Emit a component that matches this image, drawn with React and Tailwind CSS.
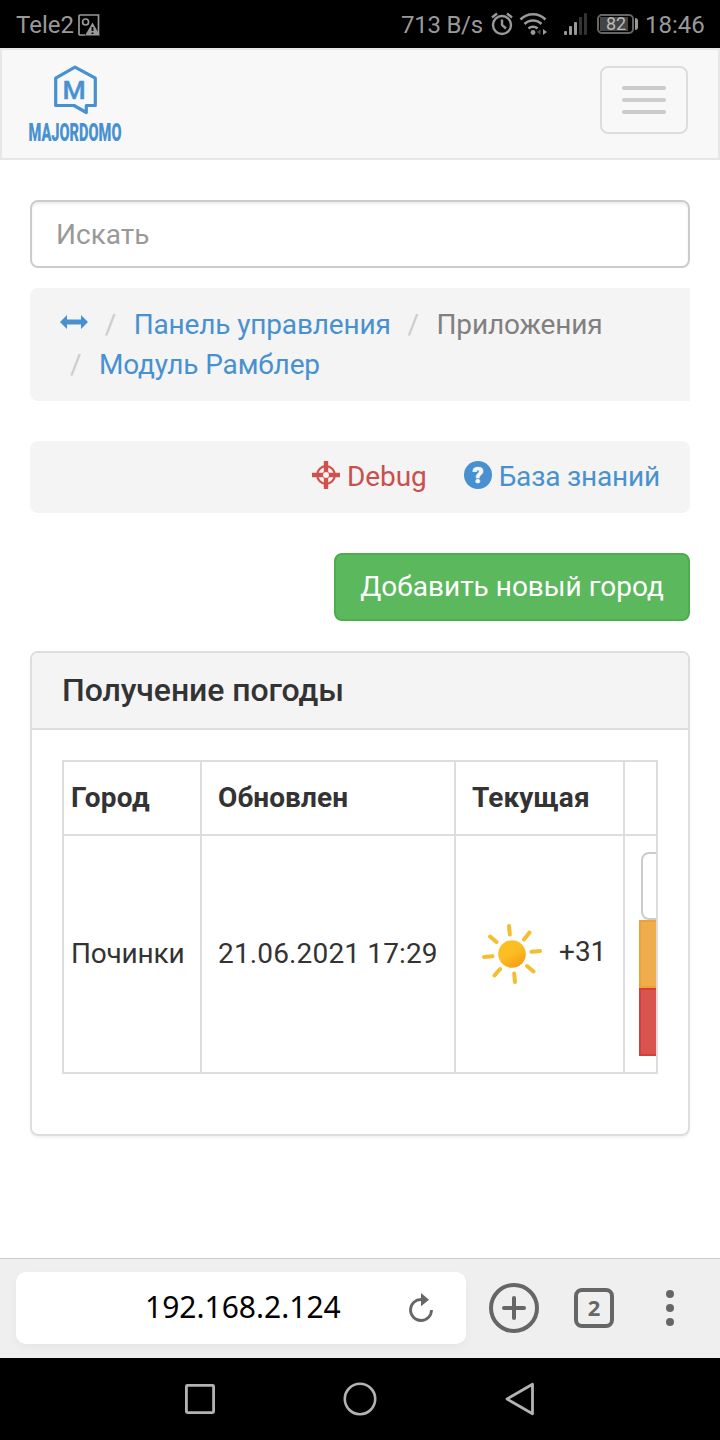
import React from 'react';

const breadcrumbs = [
  { label: 'Панель управления', active: false },
  { label: 'Приложения', active: true },
  { label: 'Модуль Рамблер', active: false },
];

const cities = [{ name: 'Починки', updated: '21.06.2021 17:29', temp: '+31' }];

const StatusBar = () => (
  <div className="flex h-12 items-center bg-black text-2xl leading-[48px] text-[#999]">
    <span className="ml-4 w-[61px] pt-[2px]">Tele2</span>
    <svg className="h-6 w-6" viewBox="0 0 24 24" fill="none">
      <path d="M8 23H3a1 1 0 0 1-1-1V4a1 1 0 0 1 1-1h18.500v19" stroke="#999" strokeWidth="1.7" />
      <circle cx="8.600" cy="10" r="3" stroke="#999" strokeWidth="1.7" />
      <path d="M15.500 10.500L23 23.500H8Z" fill="#999" />
      <path d="M15.500 15v4M15.500 20.500v1.500" stroke="#000" strokeWidth="1.8" />
    </svg>
    <span className="ml-auto w-[90px] pt-[2px] tracking-[-0.25px]">713 B/s</span>
    {/* alarm */}
    <svg className="h-6 w-6" viewBox="0 0 24 24" fill="none" stroke="#999" strokeWidth="2.400">
      <circle cx="11" cy="13" r="9" />
      <path d="M11 7.500V13l4 3.500M1 5.500L6 1.500M21 5.500L16 1.500" />
    </svg>
    {/* wifi */}
    <svg className="ml-[4px] h-6 w-7" viewBox="0 0 28 24" fill="none" stroke="#999" strokeWidth="2.600">
      <path d="M1.500 7.500a17.500 17.500 0 0 1 25 0M5.500 12a12 12 0 0 1 17 0M9.500 16.500a6.500 6.500 0 0 1 9 0" />
      <circle cx="14" cy="20.500" r="2.400" fill="#999" stroke="none" />
      <path d="M18 20l3.500-3v6Z" fill="#444" stroke="none" />
      <path d="M24 17v6l4-3Z" fill="#999" stroke="none" />
    </svg>
    <svg className="ml-[17px] h-6 w-6" viewBox="0 0 24 24">
      <rect x="0" y="19" width="3" height="4" rx="1" fill="#999" />
      <rect x="5" y="14" width="3" height="9" rx="1" fill="#999" />
      <rect x="10" y="10" width="3" height="13" rx="1" fill="#999" />
      <rect x="15" y="5" width="3" height="18" rx="1" fill="#333" />
      <rect x="20" y="1" width="3" height="22" rx="1" fill="#333" />
    </svg>
    <div className="ml-[9px] flex items-center">
      <div className="h-5 w-[37px] rounded-[5px] border-2 border-[#666] p-px">
        <div className="flex h-full w-[28px] items-center justify-center bg-[#444] pl-1 text-lg leading-none text-[#bbb]">
          82
        </div>
      </div>
      <div className="ml-px h-3 w-[3px] rounded-r-sm bg-[#999]" />
    </div>
    <span className="ml-[7px] w-[75px] pt-[2px]">18:46</span>
  </div>
);

const Logo = () => (
  <svg className="h-[88px] w-[100px]" viewBox="0 0 100 88" fill="none">
    <path
      d="M47 3.200L27.700 14.200v27.300h18.300l12.300 7v-7h9V14.200Z"
      stroke="#4891d0"
      strokeWidth="3.200"
      strokeLinejoin="round"
    />
    <text x="34.500" y="35.300" fontSize="26.500" fontWeight="500" stroke="#4891d0" strokeWidth="0.400" fill="#4891d0">
      M
    </text>
    <text
      transform="translate(0.500 77) scale(0.550 1)"
      textLength="169"
      lengthAdjust="spacingAndGlyphs"
      x="0"
      y="0"
      fontSize="25.500"
      fontWeight="900"
      fill="#4891d0"
    >
      MAJORDOMO
    </text>
  </svg>
);

const Navbar = () => (
  <nav className="flex h-28 items-start justify-between border-2 border-[#e7e7e7] bg-[#f8f8f8] pr-[30px] pl-[26px]">
    <a href="#" className="mt-[14px]">
      <Logo />
    </a>
    <button className="mt-4 flex h-[68px] w-[88px] flex-col items-center justify-center gap-2 rounded-lg border-2 border-[#ddd]">
      <span className="h-1 w-11 rounded-sm bg-[#ccc]" />
      <span className="h-1 w-11 rounded-sm bg-[#ccc]" />
      <span className="h-1 w-11 rounded-sm bg-[#ccc]" />
    </button>
  </nav>
);

const Breadcrumbs = () => (
  <ol className="mt-5 h-[113px] rounded-l-lg bg-[#f4f4f4] px-[30px] pt-[17px] leading-10 tracking-[-0.15px]">
    <li className="inline-block">
      <a href="#">
        <svg className="mb-[9px] inline-block h-[14px] w-7" viewBox="0 0 28 14" fill="#4891d0">
          <path d="M0 7L7 0v4.500h14V0l7 7l-7 7V9.500H7V14Z" />
        </svg>
      </a>
    </li>{' '}
    {breadcrumbs.map((item) => (
      <React.Fragment key={item.label}>
        <li className="inline-block">
          <span className="inline-block pr-[17.5px] pl-[10px] text-[#ccc]">/</span>
          {item.active ? (
            <span className="text-[#808080]">{item.label}</span>
          ) : (
            <a href="#" className="text-[#4891d0]">{item.label}</a>
          )}
        </li>{' '}
      </React.Fragment>
    ))}
  </ol>
);

const HelpBar = () => (
  <div className="mt-10 flex h-[72px] items-center justify-end rounded-lg bg-[#f4f4f4] px-[30px]">
    <a href="#" className="flex items-center text-[#d9534f]">
      <svg className="mr-[7px] mb-[4px] h-7 w-7" viewBox="0 0 28 28" fill="none" stroke="#d2504c">
        <circle cx="14" cy="14" r="8.800" strokeWidth="2.200" />
        <path d="M14 0v11M14 17v11M0 14h11M17 14h11" strokeWidth="4.400" />
        <circle cx="14" cy="14" r="3.500" strokeWidth="0.800" />
      </svg>
      <span className="tracking-[-0.1px] text-[#c9504d]">Debug</span>
    </a>
    <a href="#" className="ml-[37px] flex items-center tracking-[-0.18px] text-[#4891d0]">
      <svg className="mr-[7px] mb-[4px] h-7 w-7" viewBox="0 0 28 28">
        <circle cx="14" cy="14" r="14" fill="#4891d0" />
        <text x="14" y="21.500" textAnchor="middle" fontSize="21.500" fontWeight="900" stroke="#f5f5f5" strokeWidth="0.600" fill="#f5f5f5">?</text>
      </svg>
      База знаний
    </a>
  </div>
);

const Sun = () => (
  <svg className="h-[60px] w-[60px]" viewBox="0 0 60 60">
    <defs>
      <linearGradient id="sun" x1="0.200" y1="0" x2="0.800" y2="1">
        <stop offset="0.450" stopColor="#fbbf24" />
        <stop offset="1" stopColor="#f59a12" />
      </linearGradient>
    </defs>
    <circle cx="30" cy="30" r="13.800" fill="url(#sun)" />
    <path
      d="M27 2l.8 8.500M47.500 8.500l-5.500 7M58 27l-8.500 .8M51.500 47.500l-6.500-5.500M33 58l-.8-8.500M12.500 51.500l5.500-6.500M2 33l8.500-.8M8 12.500l6.500 5.500"
      fill="none"
      stroke="#f6bd30"
      strokeWidth="4"
      strokeLinecap="round"
    />
  </svg>
);

const WeatherTable = () => (
  <div className="h-[314px] overflow-hidden border-2 border-[#ddd]">
    <table className="w-[700px] table-fixed border-separate border-spacing-0 text-left whitespace-nowrap">
      <thead>
        <tr className="h-[74px]">
          <th className="w-[138px] border-r-2 border-b-2 border-[#ddd] pl-[7px] tracking-[0.3px]">Город</th>
          <th className="w-[254px] border-r-2 border-b-2 border-[#ddd] pl-4 tracking-[0.1px]">Обновлен</th>
          <th className="w-[169px] border-r-2 border-b-2 border-[#ddd] pl-4 tracking-[0.1px]">Текущая</th>
          <th className="border-b-2 border-[#ddd]" />
        </tr>
      </thead>
      <tbody>
        {cities.map((city) => (
          <tr key={city.name} className="h-[236px]">
            <td className="border-r-2 border-[#ddd] pl-[7px] tracking-[-0.2px]">{city.name}</td>
            <td className="border-r-2 border-[#ddd] pl-4 tracking-[0.15px]">{city.updated}</td>
            <td className="border-r-2 border-[#ddd]">
              <div className="flex items-center pl-[26px]">
                <Sun />
                <span className="mb-1 ml-[17px]">{city.temp}</span>
              </div>
            </td>
            <td className="pl-[14px]">
              <div className="flex flex-col">
                <button className="ml-[2px] h-[68px] rounded-lg border-2 border-[#ccc] bg-white" />
                <button className="h-[68px] border-2 border-[#eea236] bg-[#f0ad4e]" />
                <button className="h-[68px] border-2 border-[#d43f3a] bg-[#d9534f]" />
              </div>
            </td>
          </tr>
        ))}
      </tbody>
    </table>
  </div>
);

const BrowserBar = () => (
  <div className="flex h-[100px] items-center border-t border-[#ccc] bg-[#efefef] pb-px pl-4">
    <div className="flex h-[72px] w-[450px] items-center rounded-[10px] bg-white shadow-[0_4px_10px_rgba(0,0,0,0.04)]">
      <span className="w-[391px] pb-[3px] pl-[129px] font-['Noto_Sans'] text-[30px] leading-none text-black">
        192.168.2.124
      </span>
      <svg className="h-8 w-7" viewBox="0 0 28 32" fill="none">
        <path d="M14.500 7.500A10.500 10.500 0 1 0 24.500 18" stroke="#666" strokeWidth="2.800" />
        <path d="M14 1l8 6.800l-8 6.500Z" fill="#666" />
      </svg>
    </div>
    <svg className="ml-[23px] h-[50px] w-[50px]" viewBox="0 0 50 50" fill="none" stroke="#666" strokeWidth="4">
      <circle cx="25" cy="25" r="23" />
      <path d="M25 15v20M15 25h20" strokeLinecap="round" />
    </svg>
    <div className="ml-[35px] flex h-10 w-10 items-center justify-center rounded-lg border-4 border-[#666] pb-[2px] font-['Noto_Sans'] text-[22px] leading-none font-bold text-[#666]">
      2
    </div>
    <div className="ml-[52px] flex flex-col gap-[6px]">
      <span className="h-2 w-2 rounded-full bg-[#666]" />
      <span className="h-2 w-2 rounded-full bg-[#666]" />
      <span className="h-2 w-2 rounded-full bg-[#666]" />
    </div>
  </div>
);

const SystemNav = () => (
  <div className="flex h-[82px] items-center justify-center gap-[126px] bg-black">
    <svg className="h-[34px] w-[34px]" viewBox="0 0 34 34" fill="none" stroke="#b3b3b3" strokeWidth="2.800">
      <rect x="3.400" y="3.400" width="27.200" height="27.200" rx="1" />
    </svg>
    <svg className="h-[34px] w-[34px]" viewBox="0 0 34 34" fill="none" stroke="#b3b3b3" strokeWidth="2.600">
      <circle cx="17" cy="17" r="15.200" />
    </svg>
    <svg className="h-[34px] w-[34px]" viewBox="0 0 34 34" fill="none" stroke="#b3b3b3" strokeWidth="2.800">
      <path d="M29.500 2.200v29.600L4 17Z" strokeLinejoin="round" />
    </svg>
  </div>
);

const App = () => {
  return (
    <div className="flex h-[1440px] w-[720px] flex-col overflow-hidden bg-white font-['Roboto',sans-serif] text-[28px] leading-10 text-[#333]">
      <StatusBar />
      <Navbar />
      <main className="flex-1 px-[30px] pt-10">
        <input
          type="text"
          placeholder="Искать"
          className="block h-[68px] w-full rounded-lg border-2 border-[#ccc] px-6 shadow-[inset_0_2px_2px_rgba(0,0,0,0.075)] placeholder:text-[#999]"
        />
        <Breadcrumbs />
        <HelpBar />
        <div className="mt-10 flex justify-end">
          <button className="h-[68px] w-[356px] rounded-lg border-2 border-[#4cae4c] bg-[#5cb85c] text-white">
            Добавить новый город
          </button>
        </div>
        <section className="mt-[30px] h-[485px] rounded-lg border-2 border-[#ddd] shadow-[0_2px_2px_rgba(0,0,0,0.05)]">
          <h3 className="h-[77px] rounded-t-md border-b-2 border-[#ddd] bg-[#f4f4f4] pl-[30px] text-[32px] leading-[75px] font-medium tracking-[-0.07px]">
            Получение погоды
          </h3>
          <div className="p-[30px]">
            <WeatherTable />
          </div>
        </section>
      </main>
      <BrowserBar />
      <SystemNav />
    </div>
  );
};

export default App;
